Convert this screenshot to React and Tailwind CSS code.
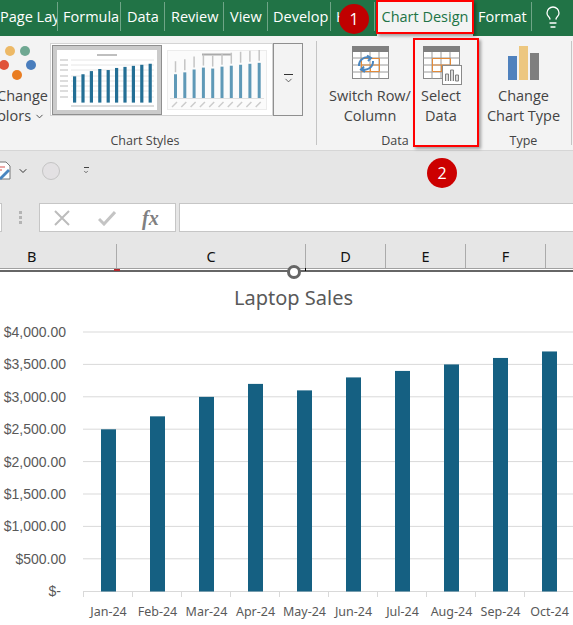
import { Lightbulb, ChevronDown } from 'lucide-react'

const TABS = [
  { label: 'Page Lay', w: 'w-[58px]', indent: 'pl-0' },
  { label: 'Formula', w: 'w-[63px]', indent: 'pl-[5px]' },
  { label: 'Data', w: 'w-[44px]', indent: 'pl-[6px]' },
  { label: 'Review', w: 'w-[59px]', indent: 'pl-[6px]' },
  { label: 'View', w: 'w-[44px]', indent: 'pl-[6px]' },
  { label: 'Develop', w: 'w-[63px]', indent: 'pl-[5px]' },
  { label: 'H', w: 'w-[44px]', indent: 'pl-[5px]' },
]
const SALES = [
  ['Jan-24', 2500], ['Feb-24', 2700], ['Mar-24', 3000], ['Apr-24', 3200], ['May-24', 3100],
  ['Jun-24', 3300], ['Jul-24', 3400], ['Aug-24', 3500], ['Sep-24', 3600], ['Oct-24', 3700],
]
const TICKS = ['$4,000.00', '$3,500.00', '$3,000.00', '$2,500.00', '$2,000.00', '$1,500.00', '$1,000.00', '$500.00']
const COLS = [
  { label: 'B', w: 'w-[117px]', pad: 'pl-[27px]', align: 'text-left' },
  { label: 'C', w: 'w-[189px]', pad: '', align: 'text-center' },
  { label: 'D', w: 'w-[80px]', pad: '', align: 'text-center' },
  { label: 'E', w: 'w-[80px]', pad: '', align: 'text-center' },
  { label: 'F', w: 'w-[80px]', pad: '', align: 'text-center' },
]

function ThumbPlain() {
  return (
    <svg width="100" height="60" viewBox="0 0 100 60" className="block">
      <rect width="100" height="60" fill="#fff" />
      <line x1="40" x2="60" y1="5" y2="5" stroke="#aaa" strokeWidth="1.5" />
      {[10, 15, 20, 26, 31, 36, 41, 47].map((y) => (
        <g key={y}>
          <line x1="14" x2="97" y1={y} y2={y} stroke="#e6e6e6" />
          <line x1="3" x2="11" y1={y} y2={y} stroke="#bbb" />
        </g>
      ))}
      {SALES.map(([m, v], i) => (
        <rect key={m} x={16 + i * 8.4} y={52.6 - (v / 4000) * 42} width="3.2" height={(v / 4000) * 42} fill="#246f95" />
      ))}
      <line x1="14" x2="97" y1="56" y2="56" stroke="#bbb" />
    </svg>
  )
}

function ThumbLabels() {
  return (
    <svg width="100" height="60" viewBox="0 0 100 60" className="block">
      <rect x="0.5" y="0.5" width="99" height="59" fill="#fbfbfb" stroke="#ececec" />
      <line x1="35" x2="65" y1="4.5" y2="4.5" stroke="#aaa" strokeWidth="2" />
      {SALES.map(([m, v], i) => {
        const h = (v / 4000) * 38
        return (
          <g key={m}>
            <rect x={7 + i * 9.3} y={48 - h} width="3" height={h} fill="#5f99b7" />
            <line x1={8.5 + i * 9.3} x2={8.5 + i * 9.3} y1={48 - h - 13} y2={48 - h - 2} stroke="#c4c4c4" strokeWidth="1.5" />
            <line x1={5 + i * 9.3} x2={10 + i * 9.3} y1="57" y2="52" stroke="#ccc" strokeWidth="1.5" />
          </g>
        )
      })}
      <line x1="3" x2="97" y1="48.5" y2="48.5" stroke="#e0e0e0" />
    </svg>
  )
}

function GridIcon({ swap }) {
  return (
    <svg width="37" height="34" viewBox="0 0 37 34" className="block shrink-0">
      <rect x="0.5" y="0.5" width="36" height="32" fill="#fff" stroke="#8a8a8a" />
      <rect x="0" y="0" width="37" height="6" fill="#7f7f7f" />
      {[12, 19, 26].map((y) => <line key={y} x1="0" x2="37" y1={y} y2={y} stroke="#9a9a9a" />)}
      {[9, 18, 27].map((x) => <line key={x} x1={x} x2={x} y1="6" y2="33" stroke="#9a9a9a" />)}
      <path d="M9.5 12.5h18v13h-18z M18.5 19v6.5 M9.5 19h18" fill="none" stroke="#e38b3a" strokeWidth="1" />
      {swap && <path d="M7 20a8 8 0 0 1 11-8M15 9.5l4 2.5-3 3M21 15a8 8 0 0 1-11 8M13 26l-4-2.5 3-3" fill="none" stroke="#4a86c0" strokeWidth="2" />}
    </svg>
  )
}

export default function App() {
  return (
    <div className="relative w-[573px] h-[625px] overflow-hidden bg-white font-['Open_Sans',sans-serif]">
      <div className="flex items-stretch h-[36px] bg-[#217346] text-white text-[14.5px]">
        {TABS.map((t) => (
          <div key={t.label} className={`${t.w} ${t.indent} shrink-0 my-[2px] h-[29px] overflow-hidden whitespace-nowrap border-r border-[#6fa587] leading-[29px]`}>{t.label}</div>
        ))}
        <div className="ml-[2px] w-[96px] mt-[2px] text-center bg-[#f3f3f3] text-[#217346] leading-[30px]">Chart Design</div>
        <div className="w-[59px] pl-[5px] my-[2px] h-[29px] border-r border-[#6fa587] leading-[29px]">Format</div>
        <div className="flex-1 flex justify-center pt-[5px]"><Lightbulb size={24} strokeWidth={1.3} /></div>
      </div>

      <div className="flex h-[115px] bg-[#f3f3f3] border-b border-[#d6d6d6] text-[#444] text-[14.5px]">
        <div className="w-[50px] shrink-0 overflow-hidden">
          <svg width="50" height="46" viewBox="0 0 50 46" className="block mt-[8px]">
            <circle cx="10" cy="7" r="5" fill="#edb966" />
            <circle cx="25" cy="7" r="5" fill="#6fa892" />
            <circle cx="4" cy="21" r="5" fill="#e0533a" />
            <circle cx="31" cy="21" r="5" fill="#4a7ebd" />
            <circle cx="17" cy="31" r="5" fill="#e97d22" />
          </svg>
          <div className="-ml-[3px] -mt-[4px] leading-[20px] whitespace-nowrap">Change</div>
          <div className="-ml-[12px] flex items-center leading-[20px] whitespace-nowrap">Colors<ChevronDown size={11} className="ml-[3px]" /></div>
        </div>

        <div className="w-[253px] shrink-0 flex flex-col">
          <div className="flex mt-[7px] h-[74px]">
            <div className="flex items-center gap-[5px] w-[223px] bg-white border border-[#d4d4d4] pl-[1px]">
              <div className="p-[4px] bg-[#cbcbcb] border border-[#8f8f8f]"><ThumbPlain /></div>
              <ThumbLabels />
            </div>
            <div className="w-[30px] flex flex-col items-center justify-center border border-[#8f8f8f] bg-[#f3f3f3]">
              <div className="w-[9px] border-t border-[#333]" />
              <ChevronDown size={11} strokeWidth={1.6} className="text-[#333]" />
            </div>
          </div>
          <div className="mt-[16px] w-[190px] text-center leading-[18px] text-[12.5px]">Chart Styles</div>
        </div>

        <div className="w-[13px] shrink-0" />
        <div className="w-px h-[104px] mt-[5px] bg-[#c4c4c4] shrink-0" />

        <div className="w-[159px] shrink-0 flex flex-col pt-[10px]">
          <div className="flex h-[86px]">
            <div className="ml-[8px] w-[90px] flex flex-col items-center">
              <GridIcon swap />
              <div className="mt-[6px] text-center leading-[20px] whitespace-nowrap">Switch Row/<br />Column</div>
            </div>
            <div className="ml-[2px] w-[48px] flex flex-col items-center relative">
              <GridIcon />
              <svg width="20" height="20" viewBox="0 0 20 20" className="absolute left-[25px] top-[19px]">
                <rect x="0.5" y="0.5" width="19" height="19" fill="#fff" stroke="#8a8a8a" />
                <path d="M3.5 16V9h3v7M8.5 16V5h3v11M13.5 16v-6h3v6z" fill="#ddd" stroke="#7f7f7f" />
              </svg>
              <div className="mt-[6px] text-center leading-[20px]">Select<br />Data</div>
            </div>
          </div>
          <div className="pr-[3px] text-center leading-[18px] text-[12.5px]">Data</div>
        </div>

        <div className="flex-1 flex flex-col items-center pt-[10px]">
          <svg width="32" height="34" viewBox="0 0 32 34" className="block shrink-0">
            <rect x="0" y="10" width="9" height="24" fill="#4f81bd" />
            <rect x="11" y="0" width="9" height="34" fill="#edc77f" />
            <rect x="22" y="7" width="9" height="27" fill="#7f7f7f" />
          </svg>
          <div className="mt-[6px] h-[46px] text-center leading-[20px] whitespace-nowrap">Change<br />Chart Type</div>
          <div className="text-center leading-[18px] text-[12.5px]">Type</div>
        </div>
        <div className="w-px h-[104px] mt-[5px] mr-[1px] bg-[#c4c4c4] shrink-0" />
      </div>

      <div className="flex items-center h-[52px] bg-[#e6e6e6] pb-[12px]">
        <svg width="14" height="20" viewBox="0 0 14 20" className="-ml-[3px] block">
          <path d="M0 1h9l4 4v13H0z" fill="#fff" stroke="#777" />
          <path d="M2 6h6M2 9h3" stroke="#d9534f" />
          <path d="M2 17l9-9 2 2-9 9z" fill="#4a86c0" />
        </svg>
        <ChevronDown size={12} strokeWidth={2} className="ml-[6px] text-[#333]" />
        <div className="ml-[13px] w-[18px] h-[18px] rounded-full bg-[#e3e1e3] border border-[#c4c4c4]" />
        <div className="ml-[23px] flex flex-col items-center gap-[1px]">
          <div className="w-[5px] border-t border-[#444]" />
          <ChevronDown size={6} strokeWidth={3} className="text-[#444]" />
        </div>
      </div>

      <div className="flex items-stretch h-[29px] bg-[#e6e6e6]">
        <div className="w-[2px] bg-white border-y border-r border-[#c6c6c6]" />
        <div className="w-[37px] flex flex-col items-center justify-center gap-[2px]">
          {[0, 1, 2].map((i) => <div key={i} className="w-[3px] h-[3px] bg-[#b4b4b4]" />)}
        </div>
        <div className="w-[137px] flex items-center bg-white border border-[#c6c6c6]">
          <svg width="16" height="16" viewBox="0 0 16 16" className="ml-[14px] block"><path d="M1 1l14 14M15 1L1 15" stroke="#bcbcbc" strokeWidth="2" /></svg>
          <svg width="18" height="16" viewBox="0 0 18 16" className="ml-[28px] block"><path d="M1 9l5 5L17 2" fill="none" stroke="#c4c4c4" strokeWidth="3" /></svg>
          <span className="ml-[26px] font-['Liberation_Serif',serif] italic font-bold text-[20px] leading-none text-[#808080]">fx</span>
        </div>
        <div className="ml-[3px] flex-1 bg-white border-y border-l border-[#c6c6c6]" />
      </div>

      <div className="flex h-[36px] bg-[#e6e6e6] text-[#111] text-[14.5px] font-['Noto_Sans',sans-serif]">
        {COLS.map((c) => (
          <div key={c.label} className={`${c.w} ${c.pad} ${c.align} shrink-0 mt-[12px] h-[24px] border-r border-[#ababab] leading-[24px]`}>{c.label}</div>
        ))}
      </div>

      <div className="relative h-[4px] bg-white border-t border-[#a0a0a0] border-b-2 border-b-[#666]">
        <div className="absolute left-[114px] top-0 w-[6px] h-[2px] bg-[#b3282d]" />
        <div className="absolute left-[287px] -top-[4px] w-[14px] h-[14px] rounded-full bg-white border-[3px] border-[#666]" />
        <div className="absolute left-[305px] -top-px w-px h-[3px] bg-black" />
      </div>

      <div className="pt-[13px] pl-[14px] text-center text-[20px] leading-[26px] text-[#595959] font-['Noto_Sans',sans-serif]">Laptop Sales</div>

      <svg width="573" height="314" viewBox="0 6 573 314" className="block">
        {TICKS.map((t, i) => {
          const y = 27 + i * 32.4
          return (
            <g key={t}>
              <line x1="83" x2="573" y1={y} y2={y} stroke="#d9d9d9" />
              <text x="66" y={y + 5} textAnchor="end" fontFamily="Liberation Sans" fontSize="14" fill="#595959">{t}</text>
            </g>
          )
        })}
        <text x="61" y="291" textAnchor="end" fontFamily="Liberation Sans" fontSize="14" fill="#595959">$-</text>
        <line x1="83" x2="573" y1="286.5" y2="286.5" stroke="#d9d9d9" />
        {SALES.map(([m, v], i) => {
          const h = (v / 4000) * 259.5
          return (
            <g key={m}>
              <rect x={101 + i * 49} y={286.5 - h} width="15" height={h} fill="#156082" />
              <line x1={83.5 + i * 49} x2={83.5 + i * 49} y1="286" y2="292" stroke="#d9d9d9" />
              <text x={108.5 + i * 49} y="311" textAnchor="middle" fontFamily="Noto Sans" fontSize="12.5" fill="#595959">{m}</text>
            </g>
          )
        })}
      </svg>

      <div className="absolute left-[376px] top-0 w-[98px] h-[34px] border-2 border-[#ff0000] shadow-[2px_2px_3px_rgba(0,0,0,0.35)]" />
      <div className="absolute left-[413px] top-[38px] w-[66px] h-[109px] border-2 border-[#ff0000] shadow-[2px_2px_3px_rgba(0,0,0,0.35)]" />
      <div className="absolute left-[339px] top-[4px] w-[30px] h-[30px] rounded-full bg-[#c00000] text-white text-[16px] leading-[30px] text-center">1</div>
      <div className="absolute left-[427px] top-[158px] w-[30px] h-[30px] rounded-full bg-[#cc0000] text-white text-[16px] leading-[30px] text-center">2</div>
    </div>
  )
}
